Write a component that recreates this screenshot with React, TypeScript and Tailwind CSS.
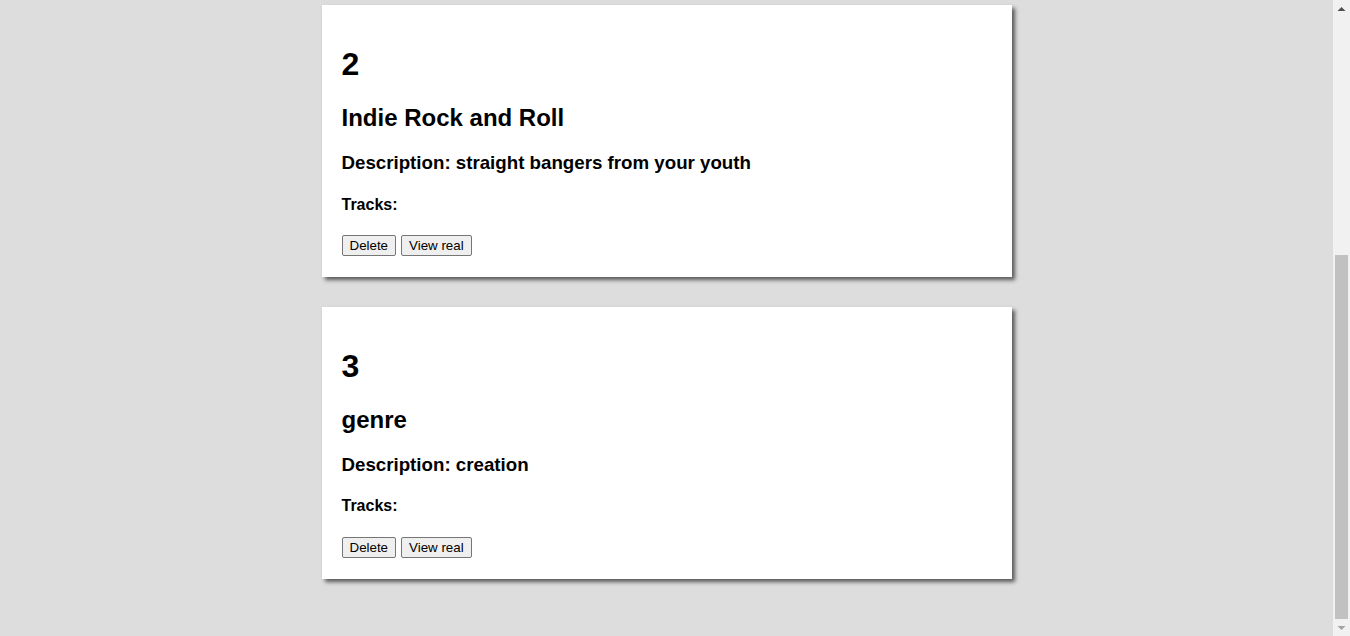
import React from "react";

type Genre = { id: number; name: string; description: string };

const genres: Genre[] = [
  { id: 2, name: "Indie Rock and Roll", description: "straight bangers from your youth" },
  { id: 3, name: "genre", description: "creation" },
];

function Card({ g }: { g: Genre }) {
  return (
    <div className="w-[690px] bg-white px-[20px] pt-[19.5px] pb-[21px] shadow-[3px_3px_4px_rgba(0,0,0,0.6)]">
      <h1 className="text-[32px] font-bold leading-[normal] my-[21.44px]">{g.id}</h1>
      <h2 className="text-[24px] font-bold leading-[normal] my-[19.92px]">{g.name}</h2>
      <h3 className="text-[18.72px] font-bold leading-[normal] my-[18.72px]">
        Description: {g.description}
      </h3>
      <h4 className="text-[16px] font-bold leading-[normal] my-[21.28px]">Tracks:</h4>
      <div className="flex gap-[5px]">
        <button className="h-[21px] border border-[#767676] bg-[#efefef] rounded-[2px] px-[7px] text-[13.333px] leading-[normal] text-black">
          Delete
        </button>
        <button className="h-[21px] border border-[#767676] bg-[#efefef] rounded-[2px] px-[7px] text-[13.333px] leading-[normal] text-black">
          View real
        </button>
      </div>
    </div>
  );
}

export default function App() {
  return (
    <div className="flex h-screen w-full overflow-hidden bg-[#dddddd] text-black font-['Liberation_Sans',Arial,sans-serif]">
      <main className="flex flex-1 flex-col items-center gap-[30px] pt-[5px]">
        {genres.map((g) => (
          <Card key={g.id} g={g} />
        ))}
      </main>
      <div className="flex w-[17px] flex-col bg-[#f1f1f1]">
        <div className="flex h-[17px] items-center justify-center">
          <svg width="9" height="6" viewBox="0 0 9 6">
            <path d="M0.5 5 L4.5 1 L8.5 5 Z" fill="#505050" />
          </svg>
        </div>
        <div className="h-[238px]" />
        <div className="mx-[2px] h-[364px] bg-[#c1c1c1]" />
        <div className="flex h-[17px] items-center justify-center">
          <svg width="9" height="6" viewBox="0 0 9 6">
            <path d="M0.5 1 L4.5 5 L8.5 1 Z" fill="#a3a3a3" />
          </svg>
        </div>
      </div>
    </div>
  );
}
